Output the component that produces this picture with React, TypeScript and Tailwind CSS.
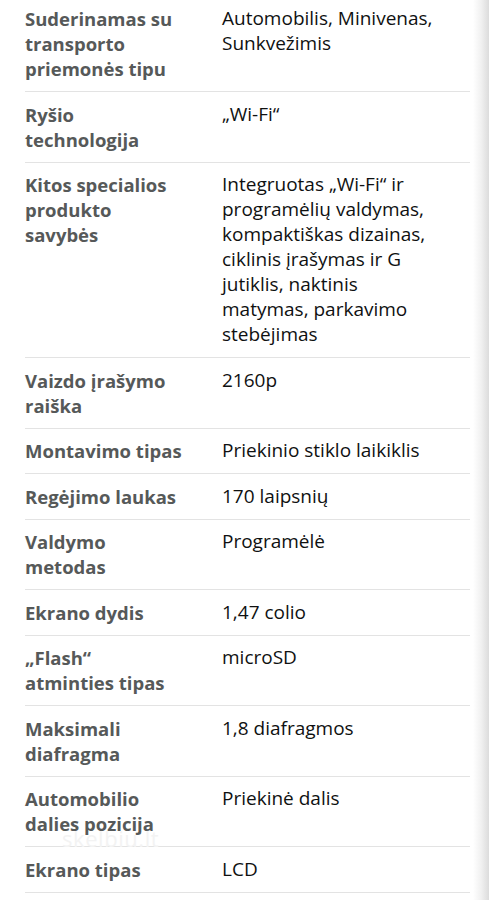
import React from 'react';

type Spec = { label: string[]; value: string[] };

// produkto specifikacijos
const specs: Spec[] = [
  { label: ['Suderinamas su', 'transporto', 'priemonės tipu'], value: ['Automobilis, Minivenas,', 'Sunkvežimis'] },
  { label: ['Ryšio', 'technologija'], value: ['„Wi-Fi“'] },
  {
    label: ['Kitos specialios', 'produkto', 'savybės'],
    value: [
      'Integruotas „Wi-Fi“ ir',
      'programėlių valdymas,',
      'kompaktiškas dizainas,',
      'ciklinis įrašymas ir G',
      'jutiklis, naktinis',
      'matymas, parkavimo',
      'stebėjimas',
    ],
  },
  { label: ['Vaizdo įrašymo', 'raiška'], value: ['2160p'] },
  { label: ['Montavimo tipas'], value: ['Priekinio stiklo laikiklis'] },
  { label: ['Regėjimo laukas'], value: ['170 laipsnių'] },
  { label: ['Valdymo', 'metodas'], value: ['Programėlė'] },
  { label: ['Ekrano dydis'], value: ['1,47 colio'] },
  { label: ['„Flash“', 'atminties tipas'], value: ['microSD'] },
  { label: ['Maksimali', 'diafragma'], value: ['1,8 diafragmos'] },
  { label: ['Automobilio', 'dalies pozicija'], value: ['Priekinė dalis'] },
  { label: ['Ekrano tipas'], value: ['LCD'] },
];

function SpecRow({ spec }: { spec: Spec }) {
  return (
    <div className="flex border-b border-[#e3e3e3] py-[9.75px] leading-[25px]">
      <div className="w-[197px] shrink-0 text-[18.5px] font-bold text-[#565959]">
        {spec.label.map((l) => (
          <div key={l} className="whitespace-nowrap">
            {l}
          </div>
        ))}
      </div>
      <div className="flex-1 text-[19px] text-[#0f1111]">
        {spec.value.map((v) => (
          <div key={v} className="whitespace-nowrap">
            {v}
          </div>
        ))}
      </div>
    </div>
  );
}

export default function App() {
  return (
    <div
      className="flex h-[900px] w-[489px] overflow-hidden bg-white"
      style={{ fontFamily: '"Open Sans", "Noto Sans", sans-serif' }}
    >
      <div className="relative flex-1 pl-[25px] pr-[3px]">
        <div className="-mt-[3.5px]">
          {specs.map((s, i) => (
            <SpecRow key={i} spec={s} />
          ))}
        </div>
        {/* skelbiu.lt vandens ženklas */}
        <div className="pointer-events-none absolute left-[62px] top-[822px] text-[22px] tracking-wide text-[#f3f3f3]">
          skelbiu.lt
        </div>
      </div>
      <div className="w-[16px] shrink-0 bg-gradient-to-r from-white via-[#f1f1f1] to-[#dcdcdc]" />
    </div>
  );
}
